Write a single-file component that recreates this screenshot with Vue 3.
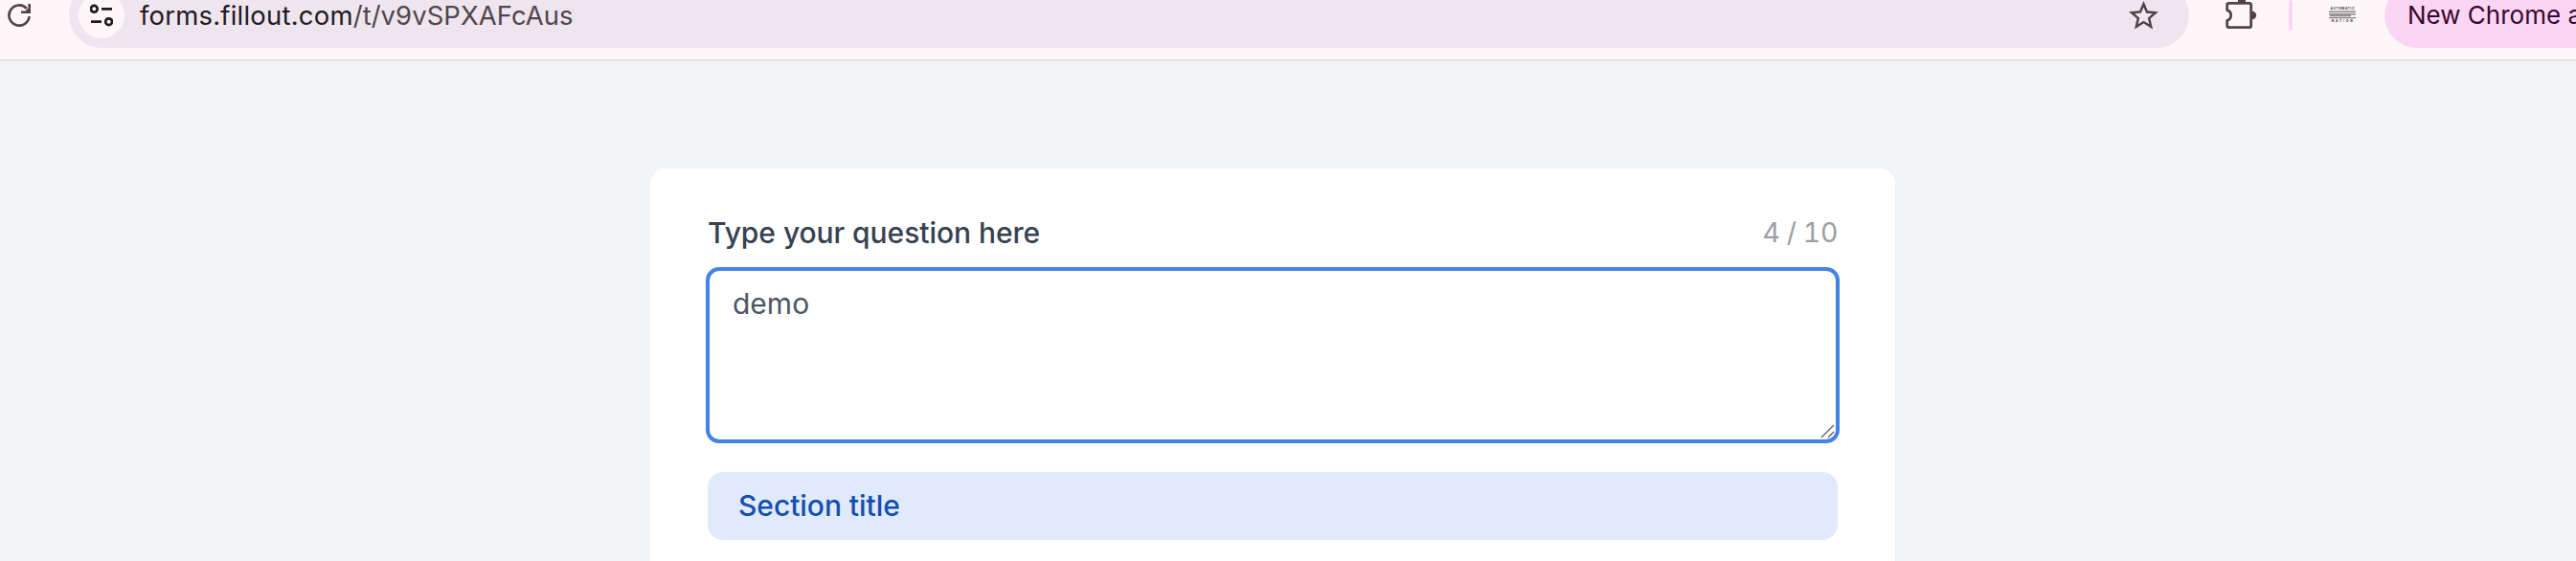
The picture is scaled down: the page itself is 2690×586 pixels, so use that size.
<script setup>
import { ref, computed } from 'vue'

const MAX_LENGTH = 10

const answer = ref('demo')

/**
 * Character counter shown next to the question label
 */
const counter = computed(() => {
  return `${answer.value.length} / ${MAX_LENGTH}`
})
</script>
<template>
  <div class="page">
    <header class="toolbar">
      <div class="toolbar-row">
        <svg class="reload" width="26" height="24" viewBox="0 0 26 24" fill="none">
          <path d="M22.6 13.2A10.6 10.6 0 1 1 19.8 4.8" stroke="#554349" stroke-width="2.7" />
          <path d="M21.4 0H24V10H14V7.4H18.4L21.4 4.6Z" fill="#554349" />
        </svg>
        <div class="omnibox">
          <span class="site-info">
            <svg width="24" height="24" viewBox="0 0 24 24" fill="none" stroke="#211a1f" stroke-width="2.7">
              <circle cx="4.3" cy="5.3" r="3.4" />
              <path d="M12 5.3H23M1 18.7H12" />
              <circle cx="19.6" cy="18.7" r="3.4" />
            </svg>
          </span>
          <span class="url"><span class="host">forms.fillout.com</span><span class="path">/t/v9vSPXAFcAus</span></span>
          <svg class="star" width="37" height="37" viewBox="0 0 24 24" fill="#4c444b">
            <path
              d="M22 9.24l-7.19-.62L12 2 9.19 8.63 2 9.24l5.46 4.73L5.82 21 12 17.27 18.18 21l-1.63-7.03L22 9.24zM12 15.4l-3.76 2.27 1-4.28-3.32-2.88 4.38-.38L12 6.1l1.71 4.04 4.38.38-3.32 2.88 1 4.28L12 15.4z"
            />
          </svg>
        </div>
        <svg class="extensions" width="36" height="36" viewBox="0 -2 36 36" fill="none">
          <path
            d="M3.7 10.7V5Q3.7 3.4 5.3 3.4H27Q28.7 3.4 28.7 5V27Q28.7 28.6 27 28.6H5.3Q3.7 28.6 3.7 27V21.3C9 19.8 9 12.2 3.7 10.7Z"
            stroke="#554349"
            stroke-width="2.8"
            stroke-linejoin="round"
          />
          <path d="M28.7 11.8H30A4.2 4.2 0 0 1 30 20.2H28.7Z" fill="#554349" />
          <path d="M15 3V0A4.2 4.2 0 0 1 23 0V3Z" fill="#554349" />
        </svg>
        <span class="divider"></span>
        <svg class="brand" width="28" height="18" viewBox="0 0 28 18">
          <text x="1.5" y="2.8" font-size="3.2" textLength="25">AUTOMATIC</text>
          <path d="M0 5.3H28M0 7.7H28M1 9.5H23M0 11.6H28" stroke="#88858a" stroke-width="1.4" />
          <text x="2.7" y="15.9" font-size="3.2" textLength="22">NATION</text>
        </svg>
        <div class="update">New Chrome available</div>
      </div>
    </header>
    <main class="card">
      <div class="question">
        <label class="label" for="answer">Type your question here</label>
        <span class="counter">{{ counter }}</span>
      </div>
      <div class="field">
        <textarea id="answer" v-model="answer" :maxlength="MAX_LENGTH" spellcheck="false"></textarea>
        <svg class="grip" width="15" height="15" viewBox="0 0 15 15">
          <path d="M1 14L14 1M8 14L14 8" stroke="#6b6b6b" stroke-width="1.5" />
        </svg>
      </div>
      <h2 class="section">Section title</h2>
    </main>
  </div>
</template>

<style>
body {
  margin: 0;
  background-color: #f3f4f6;
}
</style>

<style scoped>
.page {
  height: 586px;
  overflow: hidden;
  background-color: #f3f4f6;
  font-family: Inter, 'Liberation Sans', sans-serif;
}

.toolbar {
  box-sizing: border-box;
  height: 64px;
  overflow: hidden;
  background-color: #fdf7fa;
  border-bottom: 2px solid #ecdee3;
}

.toolbar-row {
  display: flex;
  align-items: center;
  height: 68px;
  margin-top: -18px;
}

.toolbar-row > * {
  flex-shrink: 0;
}

.reload {
  margin-left: 8px;
}

.omnibox {
  box-sizing: border-box;
  display: flex;
  align-items: center;
  width: 2214px;
  height: 68px;
  margin-left: 38px;
  padding: 0 29px 0 10px;
  border-radius: 34px;
  background-color: #efe5ee;
}

.site-info {
  display: flex;
  align-items: center;
  justify-content: center;
  width: 48px;
  height: 48px;
  border-radius: 50%;
  background-color: #fdf7fa;
}

.url {
  flex: 1;
  margin-left: 16px;
  font-size: 27.5px;
  line-height: 36px;
  white-space: nowrap;
}

.host {
  color: #211a1f;
  letter-spacing: 0.2px;
}

.path {
  color: #4f464d;
  letter-spacing: 0.03px;
}

.extensions {
  margin-left: 36px;
}

.divider {
  width: 4px;
  height: 32px;
  margin-left: 32px;
  border-radius: 2px;
  background-color: #fbd6f4;
}

.brand {
  margin-left: 38px;
  fill: #333;
  font-weight: 700;
}

.update {
  box-sizing: border-box;
  width: 400px;
  height: 68px;
  margin-left: 30px;
  padding-left: 24px;
  border-radius: 34px;
  background-color: #fbd6f4;
  color: #37072f;
  font-size: 26px;
  line-height: 68px;
  white-space: nowrap;
}

.card {
  box-sizing: border-box;
  width: 1300px;
  height: 440px;
  margin: 112px 0 0 679px;
  padding: 47px 58px 0;
  border-radius: 16px;
  background-color: #fff;
}

.question {
  display: flex;
  justify-content: space-between;
  padding: 0 2px;
  line-height: 40px;
}

.label {
  color: #374151;
  font-size: 30px;
  font-weight: 500;
  letter-spacing: -0.05px;
}

.counter {
  color: #9c9ea3;
  font-size: 28.5px;
  letter-spacing: -0.4px;
  font-variant-numeric: tabular-nums;
}

.field {
  position: relative;
  height: 184px;
  margin-top: 16px;
}

textarea {
  box-sizing: border-box;
  display: block;
  width: 100%;
  height: 100%;
  padding: 14px 24px;
  border: 4px solid #4482e6;
  border-radius: 14px;
  outline: none;
  resize: none;
  overflow: hidden;
  background-color: #fff;
  color: #4f5663;
  font-family: inherit;
  font-size: 30px;
  line-height: 40px;
}

.grip {
  position: absolute;
  right: 5px;
  bottom: 5px;
}

.section {
  height: 71px;
  margin: 30px 2px 0;
  padding-left: 32px;
  border-radius: 16px;
  background-color: #e1eafb;
  color: #124fb1;
  font-size: 30px;
  font-weight: 500;
  line-height: 70px;
  letter-spacing: -0.05px;
}
</style>
